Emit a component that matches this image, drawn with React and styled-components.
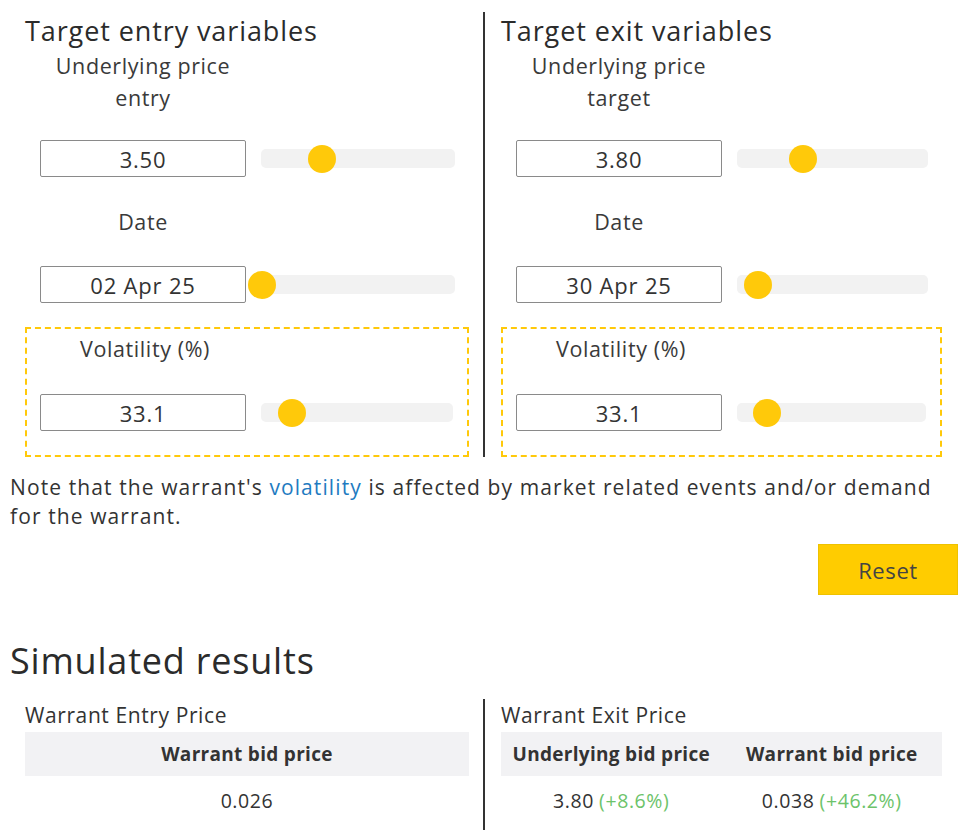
import React from 'react';
import styled, { createGlobalStyle } from 'styled-components';

const Global = createGlobalStyle`
  body {
    margin: 0;
    background: #fff;
    font-family: 'Open Sans', 'Liberation Sans', sans-serif;
    color: #333;
  }
`;

const Page = styled.div`
  width: 948px;
  margin-left: 10px;
  padding-top: 12px;
`;

const Columns = styled.div`
  display: grid;
  grid-template-columns: 474px 474px;
`;

const Column = styled.div`
  padding: 3px ${p => (p.$right ? '16px' : '15px')} 0;
  border-left: ${p => (p.$right ? '2px solid #333' : 'none')};
  margin-left: ${p => (p.$right ? '-1px' : '0')};
`;

const Heading = styled.h2`
  margin: 0;
  font-size: 27px;
  font-weight: 400;
  letter-spacing: 0.9px;
  line-height: 32px;
  color: #2b2b2b;
`;

const Label = styled.div`
  width: 206px;
  margin: ${p => p.$mt || 0}px 0 0 15px;
  text-align: center;
  font-size: 21.5px;
  letter-spacing: 0.6px;
  line-height: 32px;
  color: #3a3a3a;
`;

const Row = styled.div`
  display: flex;
  align-items: center;
  gap: 15px;
  margin-top: ${p => p.$mt || 0}px;
  padding: 0 14px 0 15px;
`;

const Field = styled.div`
  width: 206px;
  height: 37px;
  box-sizing: border-box;
  border: 1.5px solid #8a8a8a;
  border-radius: 2px;
  display: flex;
  align-items: center;
  justify-content: center;
  font-size: 22px;
  letter-spacing: 0.8px;
  color: #333;
  flex-shrink: 0;
`;

const Track = styled.div`
  position: relative;
  flex: 1;
  height: 19px;
  border-radius: 5px;
  background: #f2f2f2;
`;

const Thumb = styled.div`
  position: absolute;
  top: 50%;
  width: 28px;
  height: 28px;
  margin: -14px 0 0 -14px;
  border-radius: 50%;
  background: #ffc90a;
`;

const VolBox = styled.div`
  margin-top: 24px;
  border: 2px dashed #ffc90a;
  padding: 4px 0 24px;
`;

const VolRow = styled(Row)`
  padding: 0 14px 0 13px;
`;

const Slider = ({ pos }) => (
  <Track>
    <Thumb style={{ left: pos }} />
  </Track>
);

const Note = styled.p`
  margin: 16px 0 0;
  font-size: 21px;
  letter-spacing: 1.1px;
  line-height: 29px;
  color: #333;
`;

const Link = styled.a`
  color: #1f7bc1;
  text-decoration: none;
`;

const Actions = styled.div`
  display: flex;
  justify-content: flex-end;
  margin-top: 13px;
`;

const Button = styled.button`
  width: 140px;
  height: 51px;
  background: #ffcc00;
  border: 1px solid #eec200;
  font-family: inherit;
  font-size: 22px;
  letter-spacing: 0.6px;
  color: #444;
  cursor: pointer;
`;

const Title = styled.h1`
  margin: 44px 0 0;
  font-size: 36px;
  font-weight: 400;
  letter-spacing: 0.8px;
  line-height: 44px;
  color: #2b2b2b;
`;

const Results = styled.div`
  display: grid;
  grid-template-columns: 474px 474px;
  margin-top: 16px;
`;

const ResultCol = styled.div`
  padding: 2px ${p => (p.$right ? '16px' : '15px')} 0;
  border-left: ${p => (p.$right ? '2px solid #333' : 'none')};
  margin-left: ${p => (p.$right ? '-1px' : '0')};
  min-height: 129px;
`;

const SubHead = styled.div`
  font-size: 21px;
  letter-spacing: 0.6px;
  line-height: 28px;
  color: #333;
`;

const Table = styled.div`
  display: grid;
  grid-template-columns: repeat(${p => p.$cols}, 1fr);
  margin-top: 3px;
`;

const Th = styled.div`
  height: 44px;
  background: #f2f2f4;
  display: flex;
  align-items: center;
  justify-content: center;
  font-size: 19px;
  font-weight: 700;
  letter-spacing: 0.3px;
  color: #333;
`;

const Td = styled.div`
  height: 48px;
  display: flex;
  align-items: center;
  justify-content: center;
  font-size: 19.5px;
  letter-spacing: 0.6px;
  color: #333;
`;

const Change = styled.span`
  color: #6cc36a;
  margin-left: 5px;
`;

const Panel = ({ title, sub, value, pos, date, datePos, vol, volPos }) => (
  <>
    <Heading>{title}</Heading>
    <Label $mt={3}>
      Underlying price
      <br />
      {sub}
    </Label>
    <Row $mt={26}>
      <Field>{value}</Field>
      <Slider pos={pos} />
    </Row>
    <Label $mt={29}>Date</Label>
    <Row $mt={28}>
      <Field>{date}</Field>
      <Slider pos={datePos} />
    </Row>
    <VolBox>
      <Label>Volatility (%)</Label>
      <VolRow $mt={29}>
        <Field>{vol}</Field>
        <Slider pos={volPos} />
      </VolRow>
    </VolBox>
  </>
);

export default function App() {
  return (
    <Page>
      <Global />
      <Columns>
        <Column>
          <Panel title="Target entry variables" sub="entry" value="3.50" pos={61}
            date="02 Apr 25" datePos={1} vol="33.1" volPos={31} />
        </Column>
        <Column $right>
          <Panel title="Target exit variables" sub="target" value="3.80" pos={66}
            date="30 Apr 25" datePos={21} vol="33.1" volPos={30} />
        </Column>
      </Columns>
      <Note>
        Note that the warrant's <Link href="#">volatility</Link> is affected by market related events and/or demand for the warrant.
      </Note>
      <Actions>
        <Button>Reset</Button>
      </Actions>
      <Title>Simulated results</Title>
      <Results>
        <ResultCol>
          <SubHead>Warrant Entry Price</SubHead>
          <Table $cols={1}>
            <Th>Warrant bid price</Th>
            <Td>0.026</Td>
          </Table>
        </ResultCol>
        <ResultCol $right>
          <SubHead>Warrant Exit Price</SubHead>
          <Table $cols={2}>
            <Th>Underlying bid price</Th>
            <Th>Warrant bid price</Th>
            <Td>3.80<Change>(+8.6%)</Change></Td>
            <Td>0.038<Change>(+46.2%)</Change></Td>
          </Table>
        </ResultCol>
      </Results>
    </Page>
  );
}
